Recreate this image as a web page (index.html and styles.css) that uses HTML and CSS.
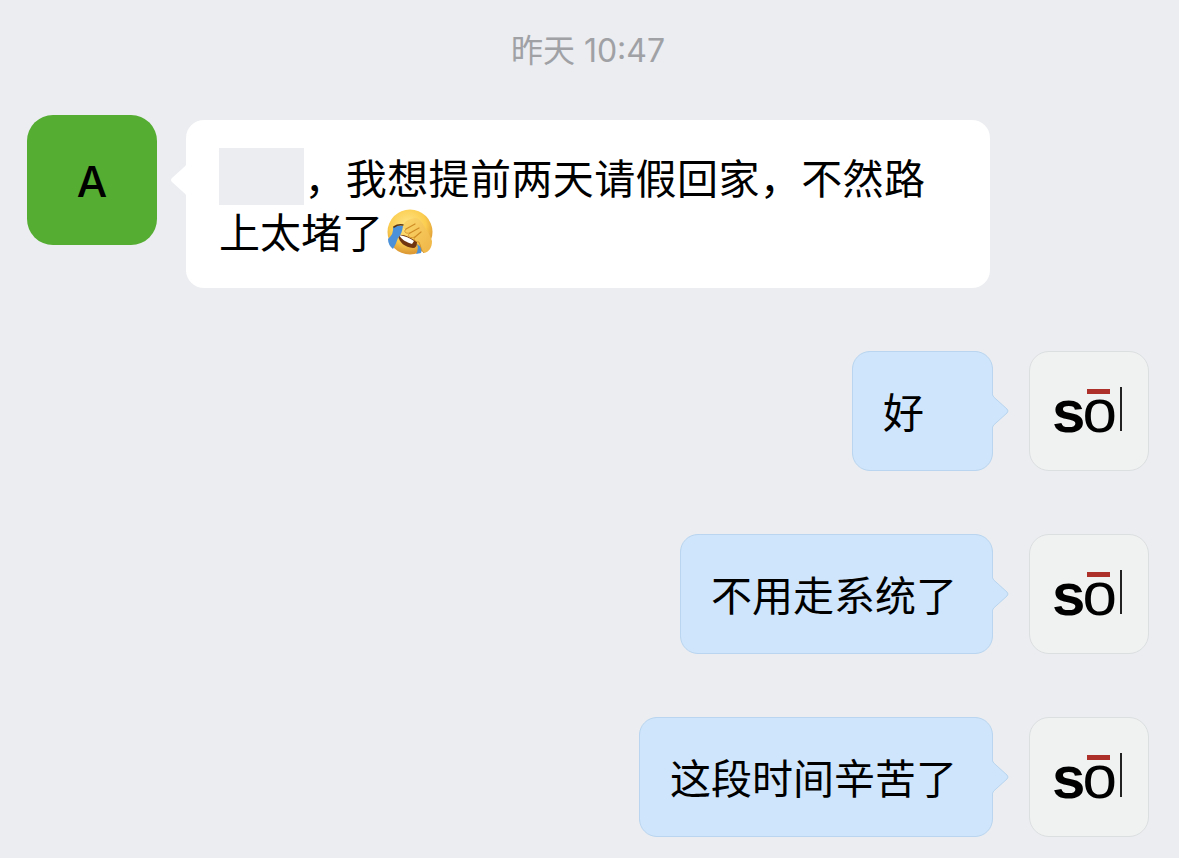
FILE: index.html
```html
<!DOCTYPE html>
<html lang="zh-CN">
<head>
    <meta charset="UTF-8">
    <meta name="viewport" content="width=device-width, initial-scale=1.0">
    <title>聊天记录</title>
    <link rel="stylesheet" href="styles.css">
</head>
<body>
    <main class="chat">
        <time class="time">昨天 10:47</time>

        <div class="message received">
            <div class="avatar avatar-letter">A</div>
            <div class="bubble">
                <p><span class="hidden-name"></span>，我想提前两天请假回家，不然路上太堵了<svg class="emoji" viewBox="0 0 48 48" role="img" aria-label="捂脸">
                    <defs>
                        <radialGradient id="face" cx="45%" cy="35%" r="62%">
                            <stop offset="0" stop-color="#ffe68a"/>
                            <stop offset="0.65" stop-color="#fbcd4f"/>
                            <stop offset="1" stop-color="#dd9a35"/>
                        </radialGradient>
                        <linearGradient id="hand" x1="0" y1="0" x2="1" y2="1">
                            <stop offset="0" stop-color="#fbd76c"/>
                            <stop offset="1" stop-color="#efb445"/>
                        </linearGradient>
                    </defs>
                    <circle cx="24" cy="24" r="22.5" fill="url(#face)"/>
                    <path d="M12 27 C18 26 25 30 31 34 Q31 40 27 40 C19 39 13 35 12 27Z" fill="#71350f"/>
                    <path d="M13 27 C19 28 24 30 28 33 L26 36 C20 34 16 32 13 27Z" fill="#fff"/>
                    <path d="M7 19 Q12 17 17 18 Q16 26 12 30 Q10 36 7 41 Q2 37 2 31 Q8 26 7 19Z" fill="#4b91d9"/>
                    <path d="M31 36 L36 40 L35 45 L30 46 Q33 41 31 36Z" fill="#4b91d9"/>
                    <path d="M8 19 Q12 16 17 17" fill="none" stroke="#5a3516" stroke-width="1.6" stroke-linecap="round"/>
                    <path d="M18 17 C17 14 23 11 29 10 C33 10 36 14 38 18 C41 22 44 27 46 33 C46 40 43 44 38 45 C35 43 35 38 33 34 C29 34 27 31 29 29 C24 31 20 28 24 25 C20 26 17 24 20 21 C17 21 16 19 18 17Z" fill="url(#hand)"/>
                    <path d="M20 21 L29 16 M24 25 L33 20 M29 29 L35 24" fill="none" stroke="#cf8c25" stroke-width="1.2" stroke-linecap="round"/>
                    <path d="M20 21 C17 24 20 26 24 25 C20 28 24 31 29 29 C27 31 29 34 33 34 C35 38 35 43 38 45" fill="none" stroke="#cf8c25" stroke-width="0.8"/>
                </svg></p>
                <svg class="tail" viewBox="0 0 17 34" aria-hidden="true"><path d="M17 0 Q16 3 12 6 L2 15 Q0 17 2 19 L12 28 Q16 31 17 34Z" fill="#fff"/></svg>
            </div>
        </div>

        <div class="message sent">
            <div class="bubble">
                <p>好</p>
                <svg class="tail" viewBox="0 0 17 34" aria-hidden="true"><path d="M0 0 Q1 3 5 6 L15 15 Q17 17 15 19 L5 28 Q1 31 0 34" fill="#cfe5fb" stroke="#b9d5ef"/></svg>
            </div>
            <svg class="avatar avatar-logo" viewBox="0 0 118 118" role="img" aria-label="sōl">
                <text x="22" y="80"><tspan class="logo-s">s</tspan><tspan class="logo-o" dx="-3">o</tspan></text>
                <rect x="57" y="37" width="23" height="5" fill="#ad302b"/>
                <rect x="90" y="35" width="2" height="44" fill="#222"/>
            </svg>
        </div>

        <div class="message sent">
            <div class="bubble">
                <p>不用走系统了</p>
                <svg class="tail" viewBox="0 0 17 34" aria-hidden="true"><path d="M0 0 Q1 3 5 6 L15 15 Q17 17 15 19 L5 28 Q1 31 0 34" fill="#cfe5fb" stroke="#b9d5ef"/></svg>
            </div>
            <svg class="avatar avatar-logo" viewBox="0 0 118 118" role="img" aria-label="sōl">
                <text x="22" y="80"><tspan class="logo-s">s</tspan><tspan class="logo-o" dx="-3">o</tspan></text>
                <rect x="57" y="37" width="23" height="5" fill="#ad302b"/>
                <rect x="90" y="35" width="2" height="44" fill="#222"/>
            </svg>
        </div>

        <div class="message sent">
            <div class="bubble">
                <p>这段时间辛苦了</p>
                <svg class="tail" viewBox="0 0 17 34" aria-hidden="true"><path d="M0 0 Q1 3 5 6 L15 15 Q17 17 15 19 L5 28 Q1 31 0 34" fill="#cfe5fb" stroke="#b9d5ef"/></svg>
            </div>
            <svg class="avatar avatar-logo" viewBox="0 0 118 118" role="img" aria-label="sōl">
                <text x="22" y="80"><tspan class="logo-s">s</tspan><tspan class="logo-o" dx="-3">o</tspan></text>
                <rect x="57" y="37" width="23" height="5" fill="#ad302b"/>
                <rect x="90" y="35" width="2" height="44" fill="#222"/>
            </svg>
        </div>
    </main>
</body>
</html>
```

FILE: styles.css
```css
* {
    box-sizing: border-box;
}
body {
    margin: 0;
    background-color: #ebedf1;
    color: #000;
    font-family: Inter, "Noto Sans CJK SC", sans-serif;
}
.chat {
    display: flex;
    flex-direction: column;
    gap: 63px;
    padding: 31px 30px 21px 27px;
}
.time {
    margin-bottom: -19px;
    color: #a0a1a5;
    font-size: 32px;
    line-height: 40px;
    text-align: center;
}
.message {
    display: flex;
    align-items: flex-start;
}
.received {
    gap: 29px;
}
.sent {
    justify-content: flex-end;
    gap: 36px;
}
.avatar {
    flex-shrink: 0;
}
.avatar-letter {
    width: 130px;
    height: 130px;
    border-radius: 26px;
    background-color: #55ad32;
    font-size: 43px;
    font-weight: 500;
    line-height: 132px;
    text-align: center;
}
.avatar-logo {
    width: 120px;
    height: 120px;
    border: 1px solid #dcdfe0;
    border-radius: 20px;
    background-color: #f0f1f1;
    font-family: "Liberation Sans", Arial, sans-serif;
}
.logo-s {
    font-size: 60px;
    font-weight: bold;
}
.logo-o {
    font-size: 62px;
}
.bubble {
    position: relative;
    border-radius: 18px;
    font-family: "Noto Sans CJK SC", sans-serif;
    font-size: 41px;
    line-height: 54px;
}
.bubble p {
    margin: 0;
}
.received .bubble {
    max-width: 804px;
    margin-top: 5px;
    padding: 29px 65px 31px 33px;
    background-color: #fff;
    text-align: justify;
}
.sent .bubble {
    min-width: 141px;
    padding: 31px 35px 33px 30px;
    border: 1px solid #b9d5ef;
    background-color: #cfe5fb;
}
.tail {
    position: absolute;
    width: 17px;
    height: 34px;
}
.received .tail {
    top: 43px;
    left: -16px;
}
.sent .tail {
    top: 42px;
    right: -17px;
}
.hidden-name {
    display: inline-block;
    width: 85px;
    height: 57px;
    margin: -1px 0 -3px;
    background-color: #ebedf1;
    vertical-align: top;
}
.emoji {
    width: 48px;
    height: 48px;
    margin: 5px 3px 0;
    vertical-align: top;
}
```
